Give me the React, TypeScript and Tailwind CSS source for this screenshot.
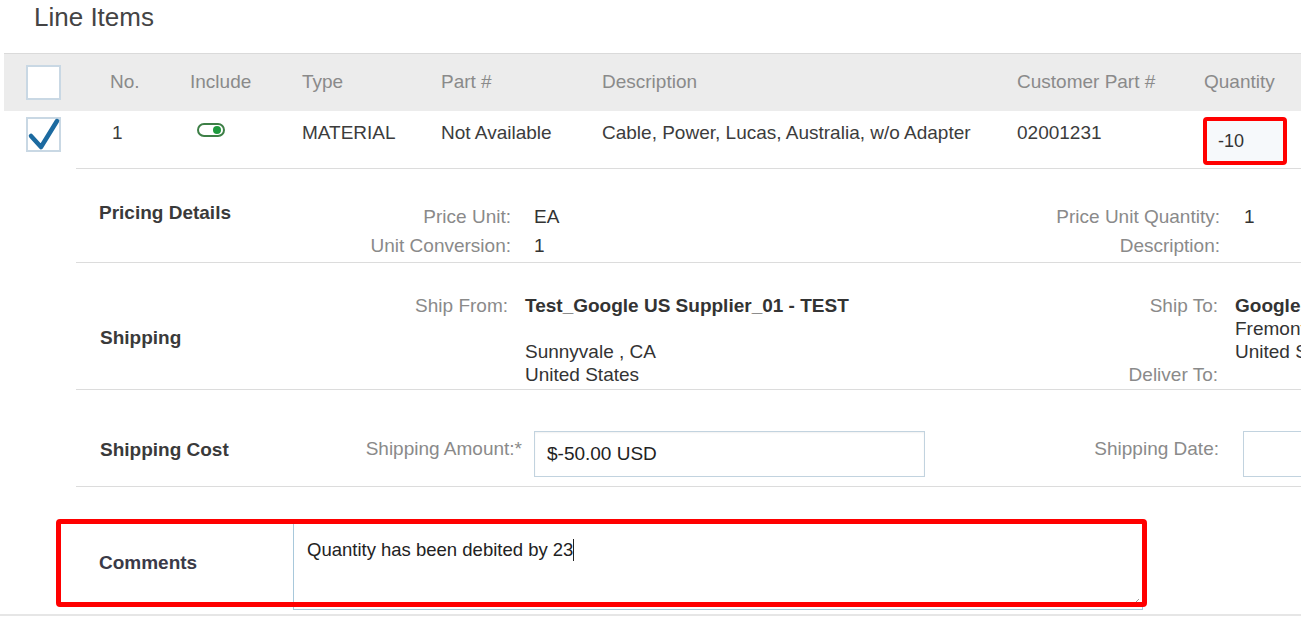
import React from "react";

function CheckBox({ checked }: { checked?: boolean }) {
  return (
    <div className="w-[35px] h-[35px] border-2 border-[#c9d8e4] bg-white relative">
      {checked && (
        <svg className="absolute left-[-2px] top-[-2px]" width="35" height="35" viewBox="0 0 35 35">
          <path d="M5 19 L15 30 L31 4" fill="none" stroke="#1c6aa0" strokeWidth="4.5" strokeLinecap="round" strokeLinejoin="round" />
        </svg>
      )}
    </div>
  );
}

function Toggle() {
  return (
    <div className="w-[28px] h-[14px] rounded-full border-2 border-[#3d7f46] bg-white flex items-center justify-end pr-[2px]">
      <div className="w-[8px] h-[8px] rounded-full bg-[#1e9a3e]" />
    </div>
  );
}

export default function App() {
  return (
    <div className="w-[1301px] h-[617px] overflow-hidden bg-white font-['Liberation_Sans',Arial,sans-serif] text-[19px] text-[#333] whitespace-nowrap">
      <div className="pl-[34px] h-[34px] leading-[34px] text-[26px] text-[#444]">Line Items</div>

      {/* header */}
      <div className="mt-[19px] ml-[4px] h-[58px] bg-[#ececec] border-t border-[#dadada] flex items-center text-[#8a8a8a]">
        <div className="w-[106px] pl-[22px] shrink-0">
          <CheckBox />
        </div>
        <div className="w-[80px] shrink-0">No.</div>
        <div className="w-[112px] shrink-0">Include</div>
        <div className="w-[139px] shrink-0">Type</div>
        <div className="w-[161px] shrink-0">Part #</div>
        <div className="w-[415px] shrink-0">Description</div>
        <div className="w-[187px] shrink-0">Customer Part #</div>
        <div className="flex-1">Quantity</div>
      </div>

      {/* data row */}
      <div className="ml-[4px] h-[57px] flex items-start text-[#3c3c3c]">
        <div className="w-[106px] pl-[22px] pt-[6px] shrink-0">
          <CheckBox checked />
        </div>
        <div className="w-[80px] pt-[11px] leading-[22px] shrink-0 pl-[2px]">1</div>
        <div className="w-[112px] pt-[12px] pl-[7px] shrink-0">
          <Toggle />
        </div>
        <div className="w-[139px] pt-[11px] leading-[22px] shrink-0">MATERIAL</div>
        <div className="w-[161px] pt-[11px] leading-[22px] shrink-0">Not Available</div>
        <div className="w-[415px] pt-[11px] leading-[22px] shrink-0">Cable, Power, Lucas, Australia, w/o Adapter</div>
        <div className="w-[187px] pt-[11px] leading-[22px] shrink-0">02001231</div>
        <div className="flex-1 pt-[6px] -ml-[1px]">
          <div className="w-[84px] h-[48px] border-4 border-[#ff0000] rounded-[4px] bg-[#f6f9fb] flex items-center pl-[11px] text-[18px] text-[#333]">
            -10
          </div>
        </div>
      </div>

      {/* detail sections */}
      <div className="ml-[76px]">
        {/* Pricing */}
        <div className="h-[94px] border-t border-[#dcdcdc] flex">
          <div className="w-[200px] shrink-0 pl-[23px] pt-[33px] leading-[22px] font-bold text-[#3a3a3a]">Pricing Details</div>
          <div className="w-[235px] shrink-0 text-right pt-[33px] leading-[29px] text-[#8a8a8a]">
            <div>Price Unit:</div>
            <div>Unit Conversion:</div>
          </div>
          <div className="flex-1 pl-[23px] pt-[33px] leading-[29px] text-[#333]">
            <div>EA</div>
            <div>1</div>
          </div>
          <div className="shrink-0 text-right pt-[33px] leading-[29px] text-[#8a8a8a]">
            <div>Price Unit Quantity:</div>
            <div>Description:</div>
          </div>
          <div className="w-[81px] shrink-0 pl-[24px] pt-[33px] leading-[29px] text-[#333]">
            <div>1</div>
          </div>
        </div>

        {/* Shipping */}
        <div className="h-[127px] border-t border-[#dcdcdc] flex">
          <div className="w-[200px] shrink-0 pl-[24px] pt-[64px] leading-[22px] font-bold text-[#3a3a3a]">Shipping</div>
          <div className="w-[235px] shrink-0 text-right pr-[3px] pt-[31px] leading-[23px] text-[#8a8a8a]">
            <div>Ship From:</div>
          </div>
          <div className="flex-1 pl-[14px] pt-[31px] leading-[23px] text-[#333]">
            <div className="font-bold">Test_Google US Supplier_01 - TEST</div>
            <div>&nbsp;</div>
            <div>Sunnyvale , CA</div>
            <div>United States</div>
          </div>
          <div className="shrink-0 text-right pr-[17px] pt-[31px] leading-[23px] text-[#8a8a8a]">
            <div>Ship To:</div>
            <div>&nbsp;</div>
            <div>&nbsp;</div>
            <div>Deliver To:</div>
          </div>
          <div className="w-[66px] shrink-0 overflow-hidden pt-[31px] leading-[23px] text-[#333]">
            <div className="font-bold">Google</div>
            <div>Fremont</div>
            <div>United States</div>
          </div>
        </div>

        {/* Shipping cost */}
        <div className="h-[98px] border-t border-b border-[#dcdcdc] flex">
          <div className="w-[200px] shrink-0 pl-[24px] pt-[49px] leading-[22px] font-bold text-[#3a3a3a]">Shipping Cost</div>
          <div className="w-[246px] shrink-0 text-right pt-[48px] leading-[22px] text-[#8a8a8a]">Shipping Amount:*</div>
          <div className="flex-1 pl-[12px] pt-[41px]">
            <div className="w-[391px] h-[46px] border border-[#c2d3df] bg-white shadow-[inset_0_1px_2px_rgba(0,0,0,0.06)] flex items-center pl-[12px] text-[#222]">
              $-50.00 USD
            </div>
          </div>
          <div className="shrink-0 text-right pr-[24px] pt-[48px] leading-[22px] text-[#8a8a8a]">Shipping Date:</div>
          <div className="w-[58px] shrink-0 overflow-hidden pt-[41px]">
            <div className="w-[120px] h-[46px] border border-[#c2d3df] bg-white" />
          </div>
        </div>
      </div>

      {/* Comments */}
      <div className="relative pt-[35px]">
        <div className="flex">
          <div className="w-[293px] shrink-0 pl-[99px] pt-[30px] leading-[22px] font-bold text-[#3a3a48]">Comments</div>
          <div className="relative w-[850px] h-[88px] border border-[#a8c8db] bg-white pl-[13px] pt-[16px] leading-[22px] text-[18.5px] text-[#222]">
            <span>Quantity has been debited by 23</span>
            <span className="inline-block w-px h-[22px] bg-[#222] align-top" />
            <svg className="absolute right-[2px] bottom-[2px]" width="9" height="9" viewBox="0 0 9 9">
              <path d="M8 1 L1 8 M8 5 L5 8" stroke="#999" strokeWidth="1" />
            </svg>
          </div>
        </div>
        <div className="absolute left-[56px] top-[32px] w-[1091px] h-[88px] border-[5px] border-[#ff0000] rounded-[4px]" />
        <div className="mt-[4px] h-[2px] bg-[#e6e6e6]" />
      </div>
    </div>
  );
}
